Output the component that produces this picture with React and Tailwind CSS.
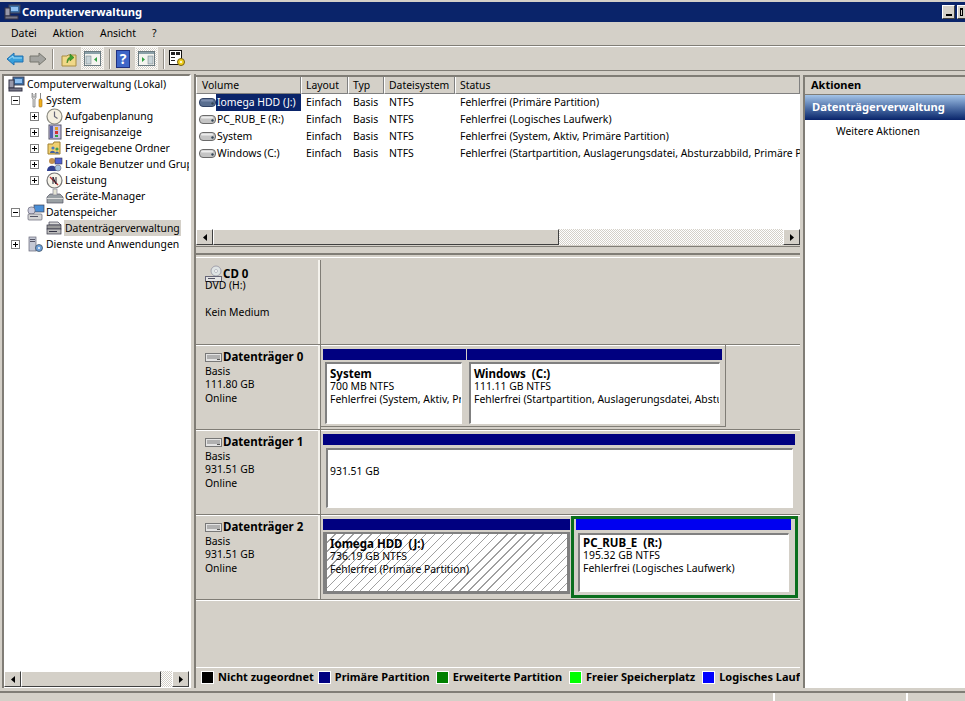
import { useState } from 'react'

const navy = 'bg-[#000080]'

// small tree / toolbar icons, hand drawn
const ComputerIcon = () => (
  <svg width="17" height="16" viewBox="0 0 17 16">
    <rect x="5" y="1" width="11" height="8" fill="#3a6ea5" stroke="#445" />
    <rect x="7" y="3" width="7" height="4" fill="#8fc0f0" />
    <rect x="1" y="4" width="5" height="8" fill="#99a" stroke="#334" />
    <rect x="1" y="12" width="13" height="3" fill="#778" stroke="#334" />
  </svg>
)
const ToolsIcon = () => (
  <svg width="16" height="16" viewBox="0 0 16 16">
    <path d="M4 1v5l1 1v8h2V7l1-1V1L7 2v3H5V2z" fill="#dcdcdc" stroke="#777" strokeWidth="0.7" />
    <rect x="11" y="7" width="3" height="8" rx="1" fill="#f0b020" stroke="#a06a10" strokeWidth="0.6" />
    <rect x="12" y="1" width="1" height="6" fill="#888" />
  </svg>
)
const ClockIcon = () => (
  <svg width="17" height="17" viewBox="0 0 17 17">
    <circle cx="8.5" cy="8.5" r="7.5" fill="#f4efe0" stroke="#8a8a80" strokeWidth="1.2" />
    <path d="M8.5 3.5v5l3 2" fill="none" stroke="#667" strokeWidth="1.2" />
  </svg>
)
const EventIcon = () => (
  <svg width="16" height="16" viewBox="0 0 16 16">
    <rect x="2" y="1" width="12" height="14" fill="#c8c0e8" stroke="#556" />
    <rect x="3" y="2" width="3" height="12" fill="#5060b0" />
    <rect x="8" y="3" width="3" height="3" fill="#e0a020" />
    <rect x="8" y="7" width="3" height="3" fill="#d03030" />
    <rect x="8" y="11" width="3" height="2" fill="#30a040" />
  </svg>
)
const FolderUsersIcon = () => (
  <svg width="16" height="16" viewBox="0 0 16 16">
    <path d="M1 4h5l1-2h6v12H1z" fill="#f0d070" stroke="#a08030" />
    <circle cx="6" cy="8" r="1.6" fill="#4878c0" />
    <circle cx="10" cy="9" r="1.6" fill="#40a050" />
    <path d="M3 13c0-3 5-3 5 0zM8 13.5c0-2.500 4-2.500 4 0z" fill="#4060a0" />
  </svg>
)
const UsersIcon = () => (
  <svg width="17" height="17" viewBox="0 0 17 17">
    <circle cx="6" cy="5" r="3" fill="#c09050" />
    <path d="M1 15c0-7 10-7 10 0z" fill="#304090" />
    <rect x="9" y="2" width="7" height="6" fill="#5060d0" stroke="#334" strokeWidth="0.6" />
    <circle cx="12" cy="12" r="3" fill="#a0c0e0" stroke="#667" strokeWidth="0.6" />
  </svg>
)
const PerfIcon = () => (
  <svg width="17" height="17" viewBox="0 0 17 17">
    <circle cx="8.5" cy="8.5" r="7.500" fill="#f6f4ea" stroke="#777" strokeWidth="1.2" />
    <path d="M4 5l8 8" stroke="#c03030" strokeWidth="1.500" />
    <path d="M7 12V5l3 7V5" fill="none" stroke="#223" strokeWidth="1" />
  </svg>
)
const DeviceIcon = () => (
  <svg width="18" height="16" viewBox="0 0 18 16">
    <path d="M1 9l3-3h10l3 3v6H1z" fill="#99a0a4" stroke="#556" strokeWidth="0.7" />
    <rect x="1" y="10" width="16" height="1" fill="#ddd" />
    <rect x="7" y="1" width="4" height="6" fill="#e4e4d4" stroke="#889" strokeWidth="0.7" />
  </svg>
)
const StorageIcon = () => (
  <svg width="18" height="17" viewBox="0 0 18 17">
    <rect x="7" y="1" width="10" height="7" fill="#4a90d8" stroke="#445" strokeWidth="0.7" />
    <rect x="1" y="3" width="7" height="7" rx="3" fill="#ccd" stroke="#667" strokeWidth="0.7" />
    <rect x="1" y="10" width="14" height="6" rx="1" fill="#d4d4d4" stroke="#667" strokeWidth="0.7" />
    <rect x="3" y="12" width="8" height="1" fill="#556" />
  </svg>
)
const DiskMgmtIcon = () => (
  <svg width="17" height="16" viewBox="0 0 17 16">
    <path d="M3 2h9l3 3H3z" fill="#d8d8d8" stroke="#445" strokeWidth="0.7" />
    <rect x="1" y="5" width="14" height="4" fill="#999" stroke="#334" strokeWidth="0.7" />
    <rect x="1" y="9" width="14" height="5" fill="#bbb" stroke="#334" strokeWidth="0.7" />
    <rect x="3" y="11" width="8" height="1" fill="#334" />
  </svg>
)
const ServicesIcon = () => (
  <svg width="17" height="17" viewBox="0 0 17 17">
    <rect x="2" y="1" width="7" height="14" fill="#c4c8d4" stroke="#667" strokeWidth="0.7" />
    <rect x="3" y="3" width="5" height="1" fill="#556" />
    <rect x="3" y="5" width="5" height="1" fill="#556" />
    <circle cx="12" cy="12" r="3.500" fill="#6ea0d8" stroke="#345" strokeWidth="0.7" />
    <circle cx="12" cy="12" r="1" fill="#fff" />
  </svg>
)
const VolumeIcon = ({ dark }) => (
  <svg width="17" height="9" viewBox="0 0 17 9">
    <rect x="0.500" y="0.500" width="16" height="8" rx="3.500" fill={dark ? '#5a6f90' : '#c4c4c4'} stroke={dark ? '#334466' : '#6a6a6a'} />
    <rect x="2" y="1.500" width="12" height="2" rx="1" fill={dark ? '#7f90b0' : '#ececec'} />
    <circle cx="13.500" cy="5.500" r="1.200" fill="#345" />
  </svg>
)
const DriveIcon = () => (
  <svg width="17" height="9" viewBox="0 0 17 9">
    <rect x="0.500" y="0.500" width="16" height="8" fill="#e4e4e4" stroke="#777" />
    <rect x="2" y="2" width="13" height="4" fill="#b0b0b0" />
    <rect x="12" y="6" width="3" height="1" fill="#555" />
  </svg>
)
const CdIcon = () => (
  <svg width="18" height="18" viewBox="0 0 18 18">
    <circle cx="11" cy="6" r="5" fill="#dfe4e4" stroke="#889" strokeWidth="0.7" />
    <circle cx="11" cy="6" r="1.500" fill="#fff" stroke="#889" strokeWidth="0.5" />
    <rect x="0.500" y="11.500" width="16" height="5" fill="#e4e4e4" stroke="#667" />
    <rect x="3" y="13" width="7" height="1" fill="#556" />
  </svg>
)

const BackIcon = () => (
  <svg width="18" height="16" viewBox="0 0 18 16">
    <path d="M1 8l7-6v3h9v6H8v3z" fill="#38a0dc" stroke="#2070b0" />
    <path d="M3 8l4-3v2h9" fill="none" stroke="#a0dcf8" />
  </svg>
)
const ForwardIcon = () => (
  <svg width="18" height="16" viewBox="0 0 18 16">
    <path d="M17 8l-7-6v3H1v6h9v3z" fill="#a4a4a0" stroke="#77776f" />
  </svg>
)
const UpIcon = () => (
  <svg width="16" height="16" viewBox="0 0 16 16">
    <path d="M1 5h5l1-1h8v11H1z" fill="#f0d888" stroke="#a88c40" />
    <path d="M6 12c0-4 1-5 3-6V3l4 3.500L9 10V8c-1 0-2 2-3 4z" fill="#40a030" stroke="#207010" strokeWidth="0.5" />
  </svg>
)
const PanelToggle = ({ right }) => (
  <div className="flex h-[23px] w-[23px] items-center justify-center border border-[#f4f2ec] bg-[repeating-conic-gradient(#ffffff_0_25%,#d4d0c8_0_50%)] bg-[length:2px_2px]">
    <svg width="17" height="15" viewBox="0 0 17 15">
      <rect x="0.500" y="0.500" width="16" height="14" fill="#f4f4f0" stroke="#6a7a80" />
      <rect x="1" y="1" width="15" height="2" fill="#8aa0a8" />
      {right ? (
        <>
          <path d="M4 6l3 2.500L4 11z" fill="#30a040" />
          <rect x="10" y="5" width="5" height="8" fill="#c8d4d8" stroke="#6a7a80" strokeWidth="0.5" />
        </>
      ) : (
        <>
          <rect x="2" y="5" width="5" height="8" fill="#c8d4d8" stroke="#6a7a80" strokeWidth="0.5" />
          <path d="M13 6l-3 2.500 3 2.500z" fill="#30a040" />
        </>
      )}
    </svg>
  </div>
)
const HelpIcon = () => (
  <div className="flex h-[18px] w-[14px] items-center justify-center border border-[#203080] bg-[#3f66c8] text-[14px] font-bold leading-none text-white">?</div>
)
const SettingsIcon = () => (
  <svg width="17" height="17" viewBox="0 0 17 17">
    <rect x="0.500" y="0.500" width="12" height="14" fill="#fff" stroke="#111" />
    <rect x="2" y="2" width="4" height="3" fill="#222" />
    <rect x="7" y="2" width="4" height="3" fill="#222" />
    <rect x="2" y="7" width="4" height="1" fill="#222" />
    <rect x="2" y="10" width="4" height="1" fill="#222" />
    <circle cx="12" cy="12" r="3.500" fill="#f0d020" stroke="#776010" />
    <circle cx="12" cy="12" r="1" fill="#fff" />
  </svg>
)

const Expander = ({ open }) => (
  <div className="relative h-[9px] w-[9px] border border-[#808080] bg-white">
    <div className="absolute left-[1px] top-[3px] h-px w-[5px] bg-black" />
    {!open && <div className="absolute left-[3px] top-[1px] h-[5px] w-px bg-black" />}
  </div>
)

const TreeRow = ({ depth = 0, exp, icon, label, active, root }) => (
  <div className="flex h-4 items-center">
    {root ? (
      <div className="w-[3px] shrink-0" />
    ) : (
      <div className={depth ? 'ml-[26px] flex w-[15px] shrink-0' : 'ml-[7px] flex w-[15px] shrink-0'}>
        {exp && <Expander open={exp === 'open'} />}
      </div>
    )}
    <div className="flex w-[19px] shrink-0 justify-center">{icon}</div>
    <span className={(active ? 'bg-[#d4d0c8] ' : '') + 'whitespace-nowrap px-[1px] leading-4'}>
      {label}
    </span>
  </div>
)

const Arrow = ({ dir }) => (
  <svg width="4" height="7" viewBox="0 0 4 7">
    <path d={dir === 'left' ? 'M4 0v7L0 3.500z' : 'M0 0v7l4-3.500z'} fill="#000" />
  </svg>
)
const ScrollBtn = ({ dir }) => (
  <div className="flex h-[16px] w-[17px] shrink-0 items-center justify-center border border-t-white border-l-white border-r-[#404040] border-b-[#404040] bg-[#d4d0c8]">
    <Arrow dir={dir} />
  </div>
)
const Scrollbar = ({ thumbClass, className = '' }) => (
  <div className={'flex h-[17px] shrink-0 ' + className}>
    <ScrollBtn dir="left" />
    <div className={'h-[16px] shrink-0 border border-t-white border-l-white border-r-[#404040] border-b-[#404040] bg-[#d4d0c8] ' + thumbClass} />
    <div className="h-[16px] grow bg-[repeating-conic-gradient(#ffffff_0_25%,#d4d0c8_0_50%)] bg-[length:2px_2px]" />
    <ScrollBtn dir="right" />
  </div>
)

const Th = ({ className, children }) => (
  <div className={'flex h-[17px] items-center overflow-hidden whitespace-nowrap border-b border-r border-b-[#808080] border-r-[#808080] border-l border-l-white pt-[2px] ' + className}>
    {children}
  </div>
)

const volumes = [
  { name: 'Iomega HDD (J:)', status: 'Fehlerfrei (Primäre Partition)', selected: true },
  { name: 'PC_RUB_E (R:)', status: 'Fehlerfrei (Logisches Laufwerk)' },
  { name: 'System', status: 'Fehlerfrei (System, Aktiv, Primäre Partition)' },
  { name: 'Windows (C:)', status: 'Fehlerfrei (Startpartition, Auslagerungsdatei, Absturzabbild, Primäre Partition)' },
]

const DiskInfo = ({ icon, title, lines, cd }) => (
  <div className={(cd ? 'pt-[7px] ' : 'pt-[5px] ') + 'w-[124px] shrink-0 border-r-2 border-r-[#f4f2ec] pl-[9px]'}>
    <div className="flex h-[14px] items-center">
      <div className="flex w-[18px] shrink-0 items-center">{icon}</div>
      <span className="font-['Noto_Sans'] text-[11.5px] font-bold">{title}</span>
    </div>
    <div className={cd ? '-mt-[2px]' : 'mt-[1px]'}>
      {lines.map((l, i) => (
        <div key={i} className={(cd ? 'h-[13.500px] leading-[13.500px]' : 'h-[13.25px] leading-[13.25px]') + ' whitespace-nowrap'}>{l || '\u00a0'}</div>
      ))}
    </div>
  </div>
)

const DiskRow = ({ className, children, ...info }) => (
  <div className={'flex shrink-0 border-b border-b-[#807d76] shadow-[0_1px_0_#ffffff] ' + className}>
    <DiskInfo {...info} />
    <div className="flex min-w-0 grow border-l border-l-[#807d76]">{children}</div>
  </div>
)

const PartText = ({ title, lines, className = 'pt-[3px]' }) => (
  <div className={'overflow-hidden whitespace-pre pl-[3px] ' + className}>
    <div className="h-[13px] font-['Noto_Sans'] text-[11.5px] font-bold leading-[13px]">{title}</div>
    {lines.map(l => (
      <div key={l} className="h-[13px] leading-[13px]">{l}</div>
    ))}
  </div>
)

const Legend = ({ color, label, className = '' }) => (
  <div className={'flex shrink-0 items-center ' + className}>
    <div className={'h-[13px] w-[13px] border border-white ' + color} />
    <span className="ml-[4px] whitespace-nowrap font-['Noto_Sans'] text-[11px] font-bold">{label}</span>
  </div>
)

const ToolSep = ({ className = 'mx-[5px]' }) => <div className={'h-[20px] w-[2px] border-r border-r-white bg-[#908c84] ' + className} />

const App = () => {
  const [selected] = useState('Datenträgerverwaltung')

  return (
    <div className="flex h-[701px] w-[965px] flex-col overflow-hidden bg-[#d4d0c8] font-['Noto_Sans',sans-serif] text-[10.4px] text-black">
      {/* title bar */}
      <div className="mt-[2px] flex h-[20px] shrink-0 items-center bg-[#0a246a] pl-[4px] font-bold">
        <ComputerIcon />
        <span className="ml-[1px] grow text-[11.2px] text-white">Computerverwaltung</span>
        <div className="flex h-[14px] w-[13px] items-end justify-center border border-t-white border-l-white border-r-[#404040] border-b-[#404040] bg-[#d4d0c8] pb-[2px]">
          <div className="h-[2px] w-[6px] bg-black" />
        </div>
        <div className="ml-[2px] h-[14px] w-[8px] border border-t-white border-l-white border-r-0 border-b-[#404040] bg-[#d4d0c8] p-[2px]">
          <div className="h-full w-full border border-t-2 border-black" />
        </div>
      </div>

      {/* menu */}
      <div className="flex h-[24px] shrink-0 items-center gap-[16px] border-b border-b-[#807d76] pl-[11px]">
        <span>Datei</span>
        <span>Aktion</span>
        <span>Ansicht</span>
        <span>?</span>
      </div>

      {/* toolbar */}
      <div className="flex h-[24px] shrink-0 items-center border-t border-t-white pl-[6px]">
        <BackIcon />
        <div className="ml-[5px]"><ForwardIcon /></div>
        <ToolSep />
        <div className="ml-[2px]"><UpIcon /></div>
        <div className="ml-[4px]"><PanelToggle /></div>
        <ToolSep />
        <HelpIcon />
        <div className="ml-[5px]"><PanelToggle right /></div>
        <ToolSep className="ml-[5px] mr-[4px]" />
        <SettingsIcon />
      </div>

      {/* panes */}
      <div className="flex min-h-0 grow border-t border-t-[#807d76] pl-[2px] pt-[3px]">
        {/* tree */}
        <div className="flex w-[189px] shrink-0 flex-col overflow-hidden border-2 border-b-0 border-[#807d76] border-r-white bg-white">
          <div className="min-h-0 grow overflow-hidden">
            <TreeRow root icon={<ComputerIcon />} label="Computerverwaltung (Lokal)" />
            <TreeRow exp="open" icon={<ToolsIcon />} label="System" />
            <TreeRow depth={1} exp="closed" icon={<ClockIcon />} label="Aufgabenplanung" />
            <TreeRow depth={1} exp="closed" icon={<EventIcon />} label="Ereignisanzeige" />
            <TreeRow depth={1} exp="closed" icon={<FolderUsersIcon />} label="Freigegebene Ordner" />
            <TreeRow depth={1} exp="closed" icon={<UsersIcon />} label="Lokale Benutzer und Gruppen" />
            <TreeRow depth={1} exp="closed" icon={<PerfIcon />} label="Leistung" />
            <TreeRow depth={1} icon={<DeviceIcon />} label="Geräte-Manager" />
            <TreeRow exp="open" icon={<StorageIcon />} label="Datenspeicher" />
            <TreeRow depth={1} icon={<DiskMgmtIcon />} label={selected} active />
            <TreeRow exp="closed" icon={<ServicesIcon />} label="Dienste und Anwendungen" />
          </div>
          <Scrollbar thumbClass="w-[140px]" />
        </div>

        {/* center */}
        <div className="ml-[3px] flex w-[606px] shrink-0 flex-col border-l-2 border-l-[#807d76]">
          <div className="mt-[1px] flex h-[171px] shrink-0 flex-col border-t-2 border-t-[#807d76] bg-white">
            <div className="flex shrink-0 bg-[#d4d0c8]">
              <Th className="w-[105px] pl-[5px]">Volume</Th>
              <Th className="w-[47px] pl-[4px]">Layout</Th>
              <Th className="w-[36px] pl-[4px]">Typ</Th>
              <Th className="w-[71px] pl-[4px]">Dateisystem</Th>
              <Th className="grow pl-[4px]">Status</Th>
            </div>
            <div className="min-h-0 grow overflow-hidden">
              {volumes.map(v => (
                <div key={v.name} className="flex h-[17px] items-center whitespace-nowrap">
                  <div className="ml-[3px] flex w-[102px] shrink-0 items-center">
                    <VolumeIcon dark={v.selected} />
                    <span className={(v.selected ? 'bg-[#0a246a] text-white ' : '') + 'h-[17px] grow pl-[1px] leading-[17px]'}>{v.name}</span>
                  </div>
                  <div className="w-[47px] shrink-0 pl-[5px]">Einfach</div>
                  <div className="w-[36px] shrink-0 pl-[5px]">Basis</div>
                  <div className="w-[71px] shrink-0 pl-[5px]">NTFS</div>
                  <div className="pl-[5px]">{v.status}</div>
                </div>
              ))}
            </div>
            <Scrollbar thumbClass="w-[346px]" className="bg-[#d4d0c8]" />
          </div>

          {/* splitter */}
          <div className="h-[14px] shrink-0 border-t border-t-[#807d76]">
            <div className="h-[8px] border-b-2 border-b-[#807d76]" />
            <div className="mt-[2px] h-px bg-white" />
          </div>

          {/* graphical view */}
          <div className="flex min-h-0 grow flex-col">
            <DiskRow cd className="h-[85px]" icon={<CdIcon />} title="CD 0" lines={['DVD (H:)', '', 'Kein Medium']} />

            <DiskRow className="h-[85px]" icon={<DriveIcon />} title="Datenträger 0" lines={['Basis', '111.80 GB', 'Online']}>
              <div className="flex h-[82px] w-[405px] border-b border-r border-[#807d76] pl-[2px] pt-[4px]">
                <div className="w-[143px] shrink-0">
                  <div className={'h-[11px] ' + navy} />
                  <div className="ml-[2px] mt-[2px] h-[62px] w-[137px] border border-t-2 border-l-2 border-t-[#808080] border-l-[#808080] border-b-white border-r-white bg-white">
                    <PartText title="System" lines={['700 MB NTFS', 'Fehlerfrei (System, Aktiv, Primäre Partition)']} />
                  </div>
                </div>
                <div className="ml-[1px] w-[255px] shrink-0">
                  <div className={'h-[11px] ' + navy} />
                  <div className="ml-[2px] mt-[2px] h-[62px] w-[251px] border border-t-2 border-l-2 border-t-[#808080] border-l-[#808080] border-b-white border-r-white bg-white">
                    <PartText title="Windows  (C:)" lines={['111.11 GB NTFS', 'Fehlerfrei (Startpartition, Auslagerungsdatei, Absturzabbild, Primäre Partition)']} />
                  </div>
                </div>
              </div>
            </DiskRow>

            <DiskRow className="h-[85px]" icon={<DriveIcon />} title="Datenträger 1" lines={['Basis', '931.51 GB', 'Online']}>
              <div className="ml-[2px] mt-[4px] w-[472px]">
                <div className={'h-[11px] ' + navy} />
                <div className="ml-[3px] mt-[3px] h-[60px] w-[467px] border border-t-2 border-l-2 border-t-[#808080] border-l-[#808080] border-b-white border-r-white bg-white pl-[2px] pt-[14px]">
                  931.51 GB
                </div>
              </div>
            </DiskRow>

            <DiskRow className="h-[85px]" icon={<DriveIcon />} title="Datenträger 2" lines={['Basis', '931.51 GB', 'Online']}>
              <div className="ml-[2px] mt-[4px] w-[247px] shrink-0">
                <div className={'h-[11px] ' + navy} />
                <div className="mt-[2px] h-[62px] border-[#808080] border-b-[3px] border-l-[4px] border-r-[3px] border-t-[2px]">
                  <div className="h-full overflow-hidden bg-white bg-[repeating-linear-gradient(135deg,#ffffff_0_5.5px,#a0a0a0_5.5px_6.4px)]">
                    <PartText className="pt-[3px]" title="Iomega HDD  (J:)" lines={['736.19 GB NTFS', 'Fehlerfrei (Primäre Partition)']} />
                  </div>
                </div>
              </div>
              <div className="ml-[1px] mt-[1px] h-[82px] w-[227px] shrink-0 border-[3px] border-[#0b6e1d] p-[1px] pt-[0px]">
                <div className="ml-[1px] h-[11px] w-[215px] bg-[#0000f0]" />
                <div className="ml-[3px] mt-[3px] h-[59px] w-[211px] border border-t-2 border-l-2 border-t-[#808080] border-l-[#808080] border-b-white border-r-white bg-white">
                  <PartText className="pt-[1px]" title="PC_RUB_E  (R:)" lines={['195.32 GB NTFS', 'Fehlerfrei (Logisches Laufwerk)']} />
                </div>
              </div>
            </DiskRow>

            <div className="grow" />

            {/* legend */}
            <div className="flex h-[21px] shrink-0 items-center overflow-hidden border-t border-t-white pb-[2px] pl-[5px]">
              <Legend color="bg-black" label="Nicht zugeordnet" />
              <Legend color="bg-[#000080]" label="Primäre Partition" className="ml-[4px]" />
              <Legend color="bg-[#008000]" label="Erweiterte Partition" className="ml-[6px]" />
              <Legend color="bg-[#00ff00]" label="Freier Speicherplatz" className="ml-[7px]" />
              <Legend color="bg-[#0000ff]" label="Logisches Laufwerk" className="ml-[7px]" />
            </div>
          </div>
        </div>

        {/* actions */}
        <div className="ml-[3px] mt-[1px] flex grow flex-col border-l-2 border-t-2 border-[#807d76] bg-white">
          <div className="flex h-[18px] shrink-0 items-center border-b border-b-[#807d76] bg-[#d4d0c8] pl-[6px] text-[11px] font-bold">Aktionen</div>
          <div className="flex h-[25px] shrink-0 items-center bg-gradient-to-b from-[#a4c4e8] to-[#0a246a] pl-[7px] text-[11.2px] font-bold text-white">Datenträgerverwaltung</div>
          <div className="pl-[31px] pt-[4px]">Weitere Aktionen</div>
        </div>
      </div>

      {/* status bar */}
      <div className="mt-[3px] flex h-[10px] shrink-0 border-t-2 border-t-[#807d76]">
        <div className="w-[775px] border-r-2 border-r-white" />
        <div className="w-[133px] border-r-2 border-r-white" />
        <div className="grow" />
      </div>
    </div>
  )
}

export default App
